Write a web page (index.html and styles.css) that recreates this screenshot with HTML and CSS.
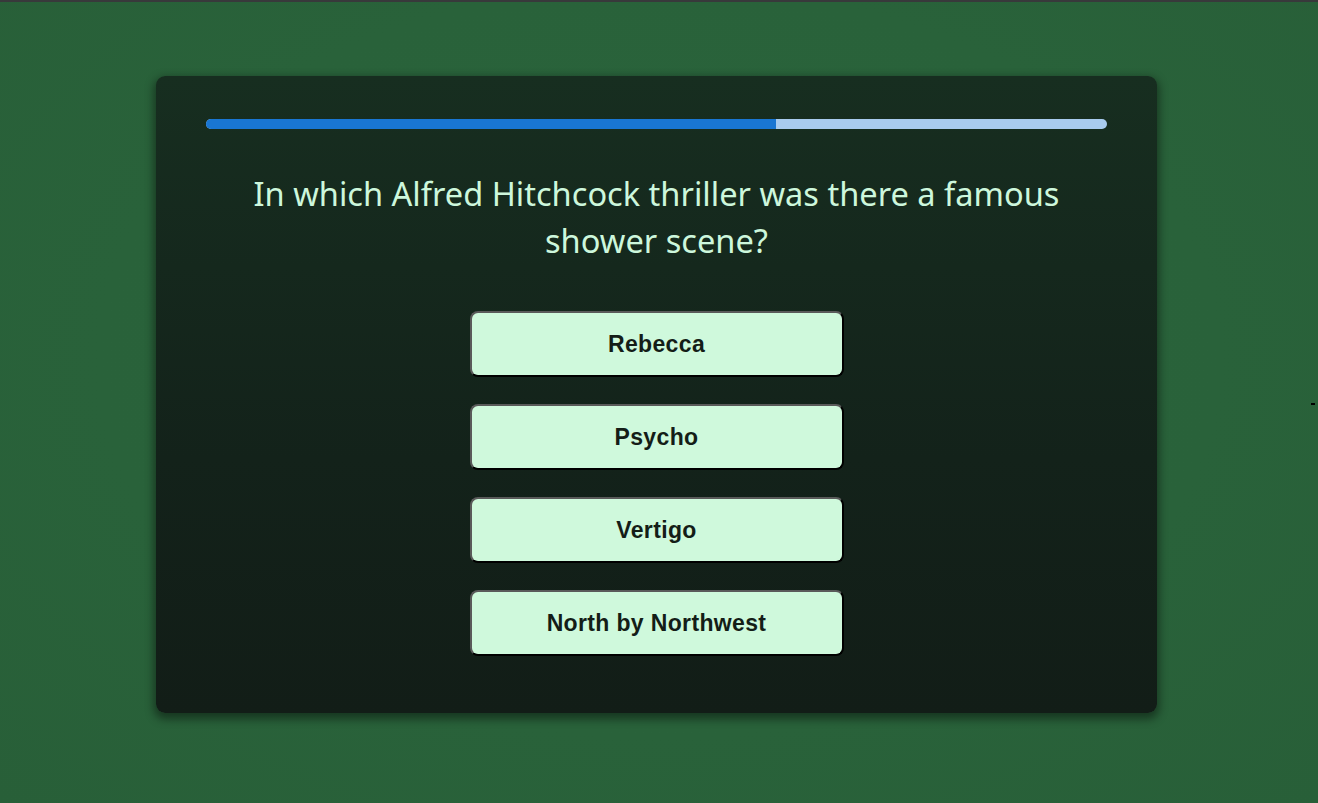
FILE: index.html
```html
<!DOCTYPE html>
<html lang="en">
<head>
<meta charset="utf-8">
<title>Quiz</title>
<link rel="stylesheet" href="styles.css">
</head>
<body>
<div class="page">
  <div class="card">
    <div class="progress"><div class="progress-fill" style="width: 63.3%"></div></div>
    <h2 class="question">In which Alfred Hitchcock thriller was there a famous shower scene?</h2>
    <div class="answers">
      <button class="answer">Rebecca</button>
      <button class="answer">Psycho</button>
      <button class="answer">Vertigo</button>
      <button class="answer">North by Northwest</button>
    </div>
  </div>
  <span class="dash"></span>
</div>
</body>
</html>
```

FILE: styles.css
```css
html, body {
  margin: 0;
  height: 100%;
}
body {
  border-top: 2px solid #38393b;
  box-sizing: border-box;
  background: radial-gradient(ellipse at 50% 45%, #2a643c 0%, #29623a 60%, #285f38 100%);
  font-family: "Noto Sans", "Open Sans", sans-serif;
  overflow: hidden;
}
.page {
  position: relative;
  padding: 74px 5px 0 0;
  height: 100%;
  box-sizing: border-box;
}
.card {
  width: 1001px;
  margin: 0 auto;
  box-sizing: border-box;
  padding: 43px 50px 57px 50px;
  border-radius: 9px;
  background: linear-gradient(180deg, #172e20 0%, #13221a 60%, #121d17 100%);
  box-shadow: 0 4px 10px 2px rgba(0, 0, 0, 0.45);
}
.progress {
  height: 10px;
  border-radius: 5px;
  background: #a8cbee;
  overflow: hidden;
}
.progress-fill {
  height: 100%;
  background: #1976d2;
}
.question {
  margin: 41px 0 47px;
  color: #cdf7dc;
  font-weight: 400;
  font-size: 32.6px;
  line-height: 47px;
  text-align: center;
  padding: 0 30px;
}
.answers {
  display: flex;
  flex-direction: column;
  align-items: center;
  gap: 27px;
}
.answer {
  width: 374px;
  height: 66px;
  border-radius: 8px;
  border: 2px solid;
  border-color: #5a5a5a #000 #000 #5a5a5a;
  background: #cff9dc;
  color: #141d17;
  font-family: "Liberation Sans", Arial, sans-serif;
  font-weight: 700;
  font-size: 23px;
  letter-spacing: 0.35px;
  cursor: pointer;
}
.dash {
  position: absolute;
  left: 1311px;
  top: 401px;
  width: 4px;
  height: 2px;
  background: #000;
}
```
